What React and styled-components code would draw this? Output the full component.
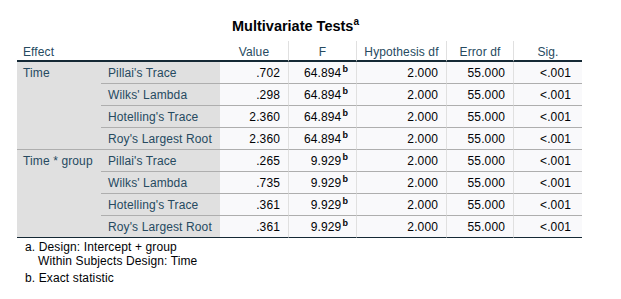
import React from 'react';
import styled, { createGlobalStyle } from 'styled-components';

const GlobalStyle = createGlobalStyle`
    body {
        margin: 0;
        background: #ffffff;
        font-family: "Liberation Sans", Arial, sans-serif;
    }
`;

const Page = styled.div`
    width: 565px;
    padding: 18px 0 0 17px;
    letter-spacing: 0.12px;
`;

const Title = styled.div`
    text-align: center;
    font-size: 14.5px;
    font-weight: bold;
    line-height: 16px;
    letter-spacing: 0;
    color: #010205;
    margin-bottom: 7px;
    padding-right: 8px;
    sup {
        font-size: 10px;
        line-height: 0;
        vertical-align: 6px;
    }
`;

const Table = styled.table`
    width: 565px;
    table-layout: fixed;
    border-collapse: separate;
    border-spacing: 0;
    font-size: 12px;
    line-height: 14px;
`;

const HeadCell = styled.th`
    font-weight: normal;
    color: #264a60;
    background: #ffffff;
    padding: 4px 6px 1px;
    text-align: ${(p) => (p.$left ? 'left' : 'center')};
    vertical-align: bottom;
    white-space: nowrap;
    border-bottom: 2px solid #152935;
    border-left: ${(p) => (p.$sep ? '1px solid #e0e0e0' : 'none')};
`;

const LabelCell = styled.td`
    color: #264a60;
    background: #e0e0e0;
    padding: 4px 6px 3px ${(p) => (p.$inner ? '7px' : '6px')};
    text-align: left;
    vertical-align: top;
    white-space: nowrap;
    border-bottom: 1px solid ${(p) => (p.$last ? '#152935' : '#aeaeae')};
`;

const DataCell = styled.td`
    color: #010205;
    background: #f9f9fb;
    padding: 4px ${(p) => (p.$pad ? p.$pad : 8)}px 3px 4px;
    text-align: right;
    white-space: nowrap;
    border-bottom: 1px solid ${(p) => (p.$last ? '#152935' : '#aeaeae')};
    border-left: ${(p) => (p.$sep ? '1px solid #e0e0e0' : 'none')};
    sup {
        font-size: 9px;
        font-weight: bold;
        line-height: 0;
        vertical-align: 5px;
        margin-left: 1px;
    }
`;

const Notes = styled.div`
    font-size: 12px;
    line-height: 14px;
    color: #010205;
    padding: 2px 0 0 8px;
`;

const Note = styled.div`
    margin-top: ${(p) => (p.$gap ? '3px' : '0')};
    padding-left: ${(p) => (p.$indent ? '13px' : '0')};
`;

const tests = ["Pillai's Trace", "Wilks' Lambda", "Hotelling's Trace", "Roy's Largest Root"];

const groups = [
    { effect: 'Time', values: ['.702', '.298', '2.360', '2.360'], f: '64.894' },
    { effect: 'Time * group', values: ['.265', '.735', '.361', '.361'], f: '9.929' },
];

const App = () => {
    return (
        <Page>
            <GlobalStyle />
            <Title>
                Multivariate Tests<sup>a</sup>
            </Title>
            <Table>
                <colgroup>
                    <col style={{ width: 84 }} />
                    <col style={{ width: 119 }} />
                    <col style={{ width: 68 }} />
                    <col style={{ width: 68 }} />
                    <col style={{ width: 90 }} />
                    <col style={{ width: 67 }} />
                    <col style={{ width: 69 }} />
                </colgroup>
                <thead>
                    <tr>
                        <HeadCell colSpan={2} $left>Effect</HeadCell>
                        <HeadCell>Value</HeadCell>
                        <HeadCell $sep>F</HeadCell>
                        <HeadCell $sep>Hypothesis df</HeadCell>
                        <HeadCell $sep>Error df</HeadCell>
                        <HeadCell $sep>Sig.</HeadCell>
                    </tr>
                </thead>
                <tbody>
                    {groups.map((g, gi) => {
                        const lastGroup = gi === groups.length - 1;
                        return tests.map((t, i) => {
                            const last = lastGroup && i === tests.length - 1;
                            return (
                                <tr key={g.effect + t}>
                                    {i === 0 && (
                                        <LabelCell rowSpan={4} $last={lastGroup}>{g.effect}</LabelCell>
                                    )}
                                    <LabelCell $inner $last={last}>{t}</LabelCell>
                                    <DataCell $last={last}>{g.values[i]}</DataCell>
                                    <DataCell $sep $last={last}>{g.f}<sup>b</sup></DataCell>
                                    <DataCell $sep $last={last}>2.000</DataCell>
                                    <DataCell $sep $last={last}>55.000</DataCell>
                                    <DataCell $sep $pad={11} $last={last}>&lt;.001</DataCell>
                                </tr>
                            );
                        });
                    })}
                </tbody>
            </Table>
            <Notes>
                <Note>a. Design: Intercept + group</Note>
                <Note $indent>Within Subjects Design: Time</Note>
                <Note $gap>b. Exact statistic</Note>
            </Notes>
        </Page>
    );
};

export default App;
